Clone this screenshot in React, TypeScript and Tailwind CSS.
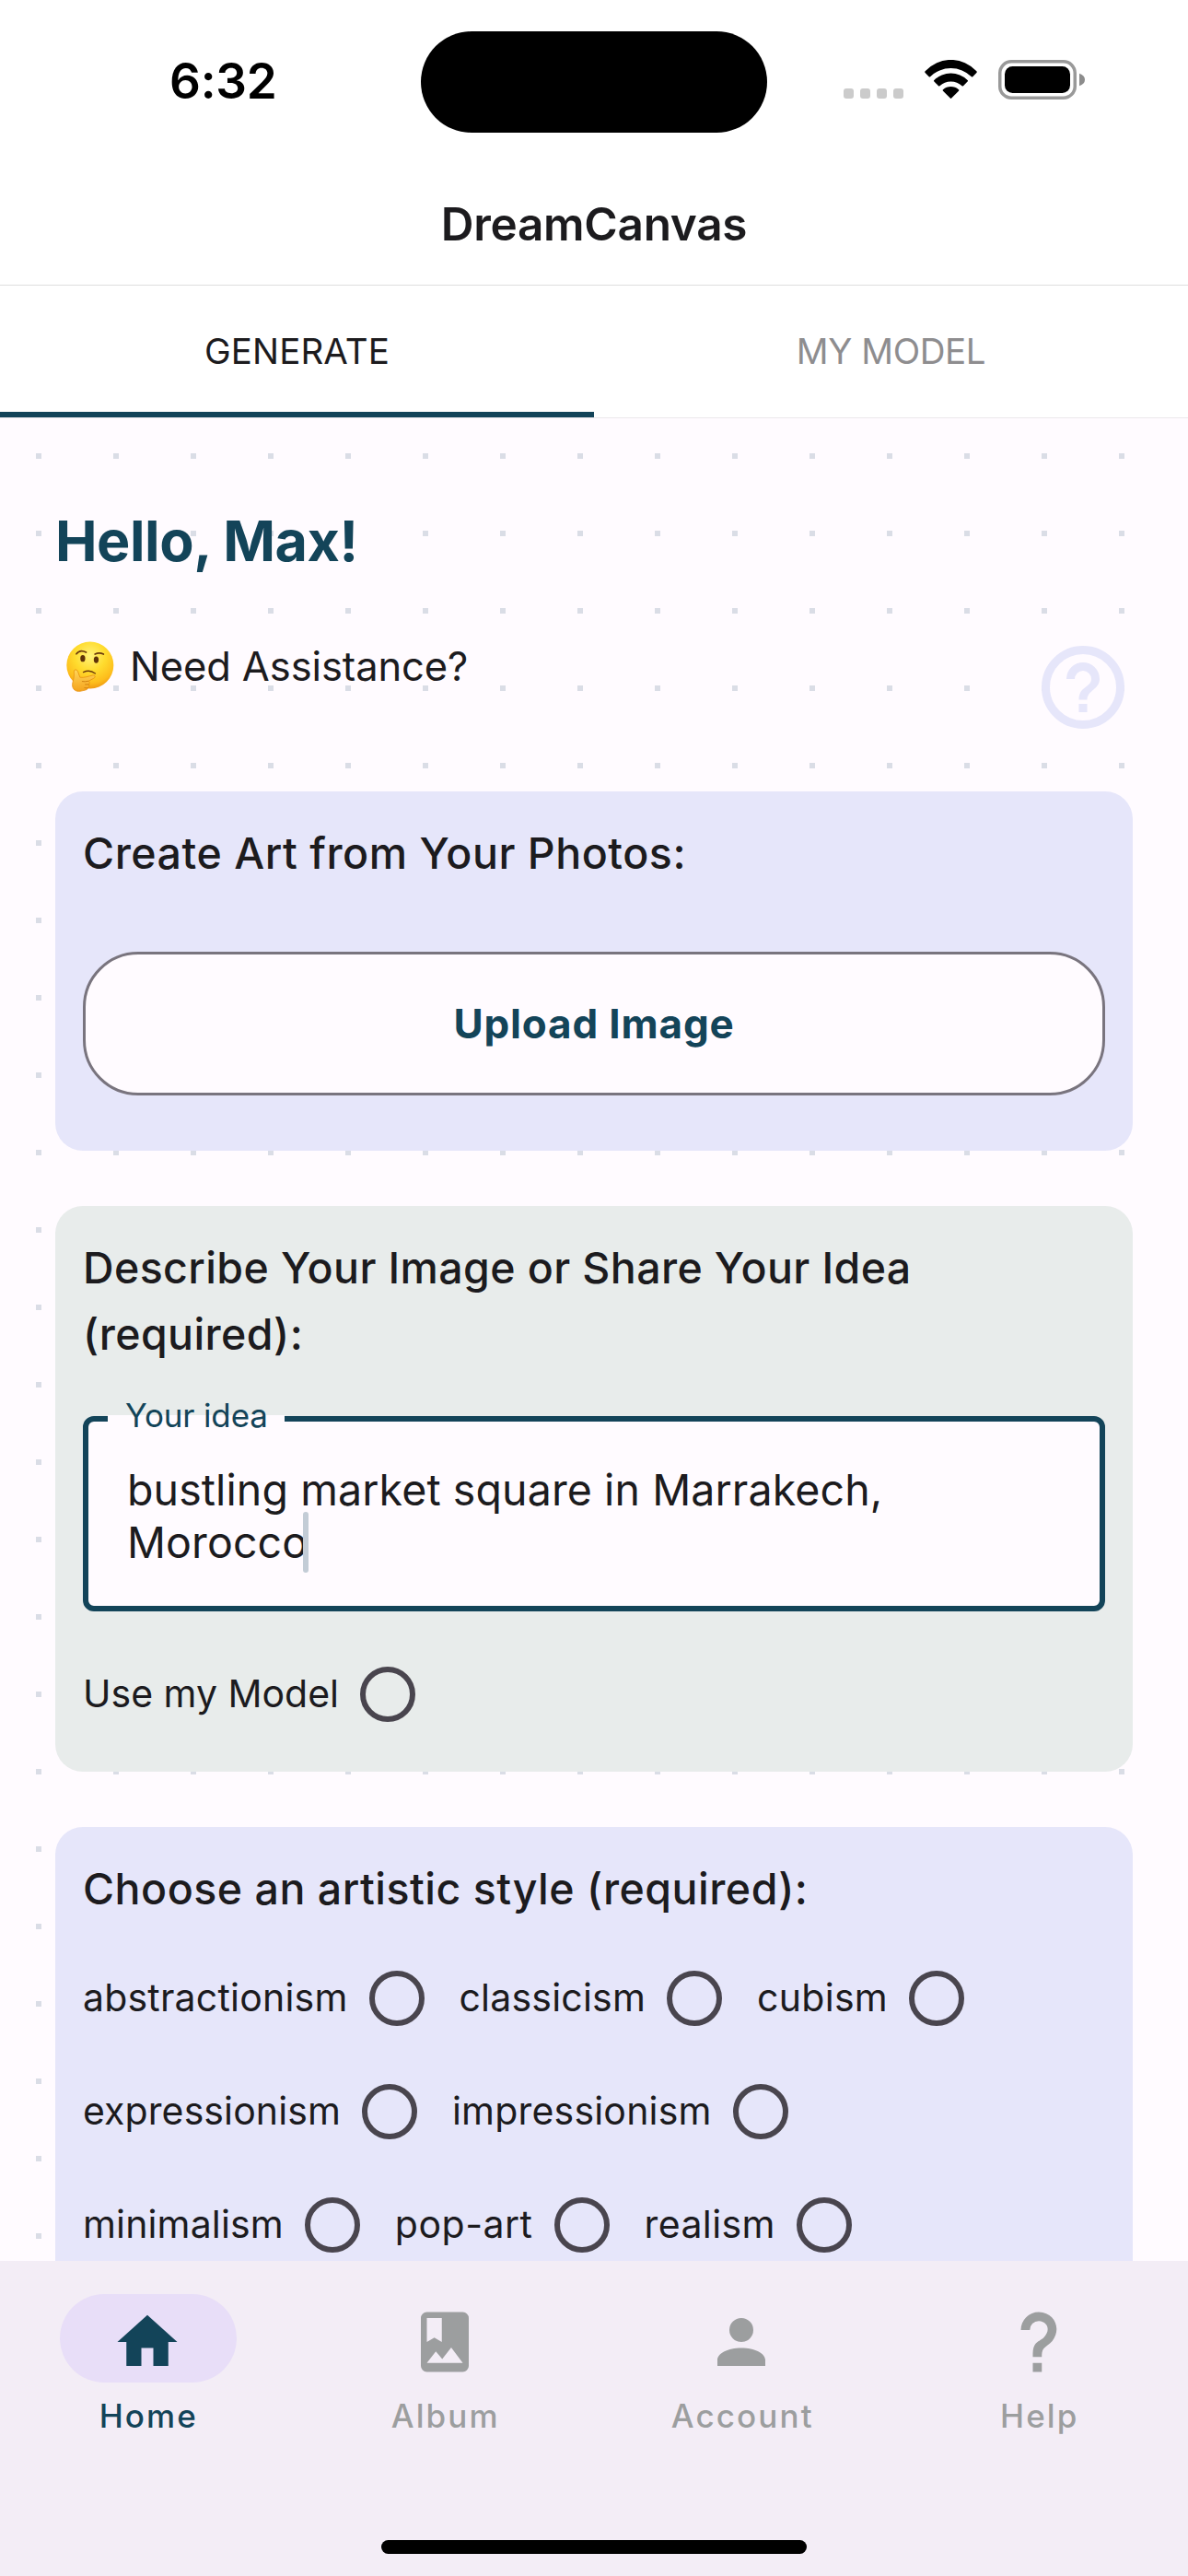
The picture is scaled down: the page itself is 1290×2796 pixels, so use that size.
import type { ReactNode } from "react";

function WifiIcon() {
  return (
    <svg className="h-[42px] w-[57px]" viewBox="0 0 57 42" fill="#000">
      <path d="M0.6 13.9Q-0.2 13.1 0.6 12.3A37.6 37.6 0 0 1 56.4 12.3Q57.2 13.1 56.4 13.9L52.3 18.2Q51.6 18.8 50.9 18.2A32.1 32.1 0 0 0 6.1 18.2Q5.4 18.8 4.7 18.2Z" />
      <path d="M10.4 23.4Q9.6 22.6 10.4 21.9A26 26 0 0 1 46.6 21.9Q47.4 22.6 46.6 23.4L42 28.2Q41.3 28.8 40.6 28.2A17.6 17.6 0 0 0 16.4 28.2Q15.7 28.8 15 28.2Z" />
      <path d="M20 33.7Q19.3 33 20 32.3A12.8 12.8 0 0 1 37 32.3Q37.7 33 37 33.7L29.2 41.6Q28.5 42.2 27.8 41.6Z" />
    </svg>
  );
}

function BatteryIcon() {
  return (
    <svg className="h-[43px] w-[94px]" viewBox="0 0 94 43">
      <rect x="1.75" y="1.75" width="81.5" height="39.5" rx="12.5" fill="none" stroke="#999" strokeWidth="3.5" />
      <rect x="7" y="7" width="71" height="29" rx="8.5" fill="#000" />
      <path d="M88 14.8Q94 17 94 21.5T88 28.2Z" fill="#8c8c8c" />
    </svg>
  );
}

function StatusBar() {
  return (
    <div className="grid h-[177px] grid-cols-[456px_378px_456px] items-start">
      <div className="pt-[52px] pl-[184px] text-[53px] leading-[72px] font-semibold tracking-[-0.25px] text-black">6:32</div>
      <div className="mx-px mt-[34px] h-[110px] rounded-full bg-black" />
      <div className="flex items-end gap-[23px] pt-[65px] pl-[82px]">
        <div className="mb-px flex gap-[7px]">
          {[0, 1, 2, 3].map((i) => (
            <span key={i} className="size-[11px] rounded-[3px] bg-[#cbcbcb]" />
          ))}
        </div>
        <div className="mb-px">
          <WifiIcon />
        </div>
        <BatteryIcon />
      </div>
    </div>
  );
}

function ThinkingFace() {
  return (
    <svg className="h-[55px] w-[52px]" viewBox="37 17 157 165">
      <defs>
        <radialGradient id="face" cx="0.5" cy="0.3" r="0.72">
          <stop offset="0" stopColor="#fff27a" />
          <stop offset="0.45" stopColor="#ffdc2e" />
          <stop offset="0.8" stopColor="#fdbd1c" />
          <stop offset="1" stopColor="#ee9410" />
        </radialGradient>
        <linearGradient id="hand" x1="0" y1="0" x2="0" y2="1">
          <stop offset="0" stopColor="#ffd65a" />
          <stop offset="1" stopColor="#f5a31c" />
        </linearGradient>
      </defs>
      <circle cx="115" cy="95" r="77" fill="url(#face)" />
      <g fill="none" stroke="#6b3a0c" strokeLinecap="round" strokeWidth="5">
        <path d="M70 58Q82 42 102 53" />
        <path d="M131 59Q145 52 159 59" />
        <path d="M93 118Q113 108 132 122" strokeWidth="4" />
      </g>
      <ellipse cx="91" cy="73" rx="8" ry="11" fill="#5e3209" />
      <ellipse cx="135" cy="77" rx="8" ry="11" fill="#5e3209" />
      <path
        d="M62 117C61 108 72 107 75 116L82 135C96 137 110 131 124 128C132 127 134 134 127 138L110 147C116 150 112 156 111 158C114 164 110 168 108 170C106 178 94 177 84 180C68 183 57 174 57 160C57 148 64 138 62 117Z"
        fill="url(#hand)"
        stroke="#e8900f"
        strokeWidth="2.5"
      />
      <path d="M88 148Q98 150 110 147M98 158H111M96 169Q102 171 108 169" fill="none" stroke="#c97608" strokeWidth="2.5" />
    </svg>
  );
}

function Card({ className, title, children }: { className: string; title: string; children: ReactNode }) {
  return (
    <section className={`mt-[60px] rounded-[30px] px-[30px] pt-[31px] ${className}`}>
      <h2 className="text-[46.5px] leading-[72px] font-medium">{title}</h2>
      {children}
    </section>
  );
}

function RadioOption({ label, tracking }: { label: string; tracking: string }) {
  return (
    <label className="flex items-center gap-[23px] text-[41px] leading-[60px]">
      <span className={`-mt-[2px] ${tracking}`}>{label}</span>
      <span className="size-[60px] rounded-full border-[6px] border-[#49454e]" />
    </label>
  );
}

const STYLE_ROWS = [
  [
    { label: "abstractionism", tracking: "tracking-[0.2px]" },
    { label: "classicism", tracking: "tracking-[0.2px]" },
    { label: "cubism", tracking: "tracking-[0.3px]" },
  ],
  [
    { label: "expressionism", tracking: "tracking-[0.1px]" },
    { label: "impressionism", tracking: "tracking-[0.2px]" },
  ],
  [
    { label: "minimalism", tracking: "tracking-[0.15px]" },
    { label: "pop-art", tracking: "tracking-[0.5px]" },
    { label: "realism", tracking: "tracking-[0.4px]" },
  ],
];

const NAV = [
  { label: "Home", active: true, path: "M10,20V14H14V20H19V12H22L12,3L2,12H5V20H10Z" },
  {
    label: "Album",
    active: false,
    path: "M6,19L9,15.14L11.14,17.72L14.14,13.86L18,19H6M6,4H11V12L8.5,10.5L6,12M18,2H6A2,2 0 0,0 4,4V20A2,2 0 0,0 6,22H18A2,2 0 0,0 20,20V4A2,2 0 0,0 18,2Z",
  },
  {
    label: "Account",
    active: false,
    path: "M12,4A4,4 0 0,1 16,8A4,4 0 0,1 12,12A4,4 0 0,1 8,8A4,4 0 0,1 12,4M12,14C16.42,14 20,15.79 20,18V20H4V18C4,15.79 7.58,14 12,14Z",
  },
  {
    label: "Help",
    active: false,
    path: "M10,19H13V22H10V19M12,2C17.35,2.22 19.68,7.62 16.5,11.67C15.67,12.67 14.33,13.33 13.67,14.17C13,15 13,16 13,17H10C10,15.33 10,13.92 10.67,12.92C11.33,11.92 12.67,11.33 13.5,10.67C15.92,8.43 15.32,5.26 12,5A3,3 0 0,0 9,8H6A6,6 0 0,1 12,2Z",
  },
];

export default function App() {
  return (
    <div className="flex h-[2796px] w-[1290px] flex-col overflow-hidden bg-white font-['Inter',sans-serif] text-[#1c1b1e]">
      <StatusBar />

      <header className="flex h-[133px] items-center justify-center border-b border-[#dedede] text-[49.5px] leading-[60px] font-semibold tracking-[-0.3px]">
        DreamCanvas
      </header>

      <div className="grid h-[144px] grid-cols-2 border-b border-[#ebe8eb] text-[38.5px] leading-[48px]">
        <div className="relative flex items-center justify-center pb-[2px] tracking-[0.1px]">
          GENERATE
          <span className="absolute inset-x-0 bottom-0 h-[6px] bg-[#134459]" />
        </div>
        <div className="flex items-center justify-center pb-[2px] tracking-[-0.4px] text-[#8e8d8f]">MY MODEL</div>
      </div>

      <main className="h-[2000px] overflow-hidden bg-[#fffbff] bg-[conic-gradient(from_270deg_at_6px_6px,#dadde6_90deg,transparent_0)] bg-[length:84px_84px] bg-[position:39px_38px] px-[60px] pt-[97px]">
        <h1 className="text-[61px] leading-[72px] font-bold tracking-[-0.45px] text-[#134459]">Hello, Max!</h1>

        <div className="mt-[69px] flex h-[108px] items-start justify-between">
          <div className="flex items-center gap-[17px] pl-3">
            <ThinkingFace />
            <span className="text-[43.5px] leading-[62px] tracking-[-0.1px]">Need Assistance?</span>
          </div>
          <svg className="size-[108px]" viewBox="0 0 24 24">
            <circle cx="12" cy="12" r="9" fill="#fffbff" stroke="#e6e6fa" strokeWidth="2" />
            <path
              fill="#e6e6fa"
              d="M11,18H13V16H11V18M12,6A4,4 0 0,0 8,10H10A2,2 0 0,1 12,8A2,2 0 0,1 14,10C14,12 11,11.75 11,15H13C13,12.75 16,12.5 16,10A4,4 0 0,0 12,6Z"
            />
          </svg>
        </div>

        <Card className="mt-[59px]! h-[390px] bg-[#e6e6fa] tracking-[0.53px]" title="Create Art from Your Photos:">
          <button className="mt-[71px] flex h-[156px] w-full items-center justify-center rounded-[60px] border-[3px] border-[#79747e] bg-[#fffbff] text-[44px] leading-[60px] font-bold tracking-[0.85px] text-[#134459]">
            Upload Image
          </button>
        </Card>

        <Card className="h-[614px] bg-[#e8eceb] tracking-[0.38px]" title="Describe Your Image or Share Your Idea (required):">
          <div className="relative mt-[53px] h-[212px] rounded-[12px] border-[6px] border-[#134459] bg-[#fffbff] pt-[46px] pl-[42px] text-[46.5px] leading-[57px] tracking-[0.1px]">
            <span className="absolute top-[-7px] left-[21px] h-[10px] w-[192px] bg-[#fffbff]" />
            <span className="absolute top-[-28px] left-[40px] text-[35px] leading-[42px] tracking-[-0.15px] text-[#134459]">Your idea</span>
            <p>
              bustling market square in Marrakech,
              <br />
              Morocco
            </p>
            <span className="absolute top-[98px] left-[233px] h-[66px] w-[6px] rounded-full bg-[#c3ccd6]" />
          </div>
          <div className="mt-[60px] flex">
            <RadioOption label="Use my Model" tracking="tracking-normal" />
          </div>
        </Card>

        <Card className="h-[700px] bg-[#e6e6fa] tracking-[0.5px]" title="Choose an artistic style (required):">
          <div className="mt-[53px] flex flex-col gap-[63px]">
            {STYLE_ROWS.map((row) => (
              <div key={row[0].label} className="flex gap-[38px]">
                {row.map((option) => (
                  <RadioOption key={option.label} {...option} />
                ))}
              </div>
            ))}
          </div>
        </Card>
      </main>

      <nav className="flex h-[342px] flex-col items-center justify-between bg-[#f3edf6] pt-[36px] pb-[24px]">
        <div className="grid w-full grid-cols-4">
          {NAV.map(({ label, active, path }) => (
            <div key={label} className={active ? "flex flex-col items-center text-[#134459]" : "flex flex-col items-center text-[#9c9e9f]"}>
              <span className={active ? "flex h-[96px] w-[192px] justify-center rounded-full bg-[#e8def8] pt-[13px] pr-[2px]" : "flex h-[96px] w-[192px] justify-center pt-[13px] pr-[2px]"}>
                <svg className="size-[78px]" viewBox="0 0 24 24" fill="currentColor">
                  <path d={path} />
                </svg>
              </span>
              <span className="mt-3 text-[35px] leading-[48px] font-medium tracking-[2.1px]">{label}</span>
            </div>
          ))}
        </div>
        <span className="h-[15px] w-[462px] rounded-full bg-black" />
      </nav>
    </div>
  );
}
